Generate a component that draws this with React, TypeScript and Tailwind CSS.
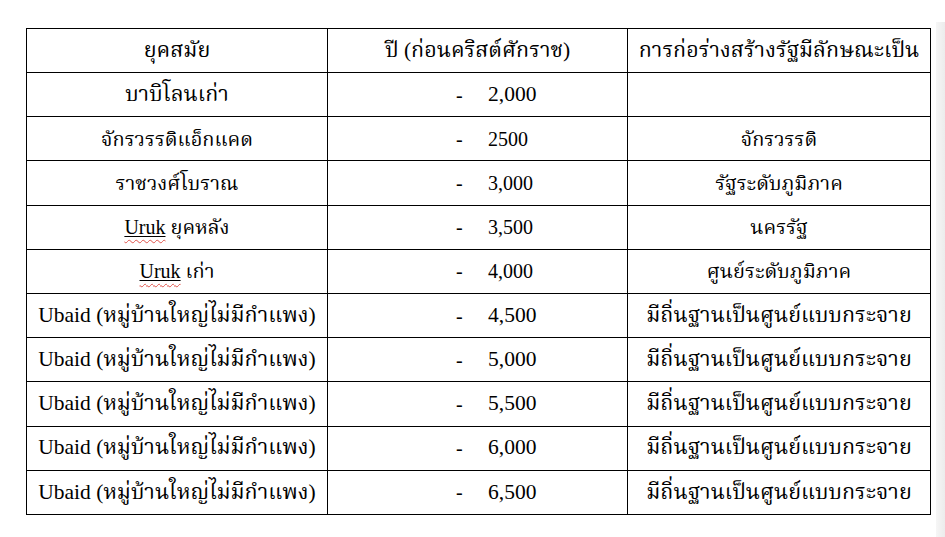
import React from 'react';

// rows of the table: era, year BC, kind of state
const rows = [
  { era: 'บาบิโลนเก่า', year: '2,000', state: '', loop: false },
  { era: 'จักรวรรดิแอ็กแคด', year: '2500', state: 'จักรวรรดิ', loop: true },
  { era: 'ราชวงศ์โบราณ', year: '3,000', state: 'รัฐระดับภูมิภาค', loop: true },
  { era: 'uruk|ยุคหลัง', year: '3,500', state: 'นครรัฐ', loop: true },
  { era: 'uruk|เก่า', year: '4,000', state: 'ศูนย์ระดับภูมิภาค', loop: true },
  { era: 'Ubaid (หมู่บ้านใหญ่ไม่มีกำแพง)', year: '4,500', state: 'มีถิ่นฐานเป็นศูนย์แบบกระจาย', loop: false },
  { era: 'Ubaid (หมู่บ้านใหญ่ไม่มีกำแพง)', year: '5,000', state: 'มีถิ่นฐานเป็นศูนย์แบบกระจาย', loop: false },
  { era: 'Ubaid (หมู่บ้านใหญ่ไม่มีกำแพง)', year: '5,500', state: 'มีถิ่นฐานเป็นศูนย์แบบกระจาย', loop: false },
  { era: 'Ubaid (หมู่บ้านใหญ่ไม่มีกำแพง)', year: '6,000', state: 'มีถิ่นฐานเป็นศูนย์แบบกระจาย', loop: false },
  { era: 'Ubaid (หมู่บ้านใหญ่ไม่มีกำแพง)', year: '6,500', state: 'มีถิ่นฐานเป็นศูนย์แบบกระจาย', loop: false },
];

const Uruk = () => (
  <span className="underline decoration-wavy decoration-[#e0524a] decoration-1 underline-offset-[5px]">
    <span className="underline decoration-black decoration-1 underline-offset-2">Uruk</span>
  </span>
);

const EraText = ({ text }: { text: string }) => {
  if (text.startsWith('uruk|')) {
    return (
      <>
        <Uruk /> {text.split('|')[1]}
      </>
    );
  }
  return <>{text}</>;
};

export default function App() {
  return (
    <div
      className="w-[945px] h-[537px] bg-white flex text-black"
      style={{ fontFamily: '"Liberation Serif", "Noto Serif Thai", "Noto Sans Thai", serif' }}
    >
      <div className="flex-1 pl-[26px] pt-[28px]">
        <table className="border-collapse leading-none">
          <thead>
            <tr className="h-[44px] text-[21.5px]">
              <th className="w-[301px] border border-black font-normal">ยุคสมัย</th>
              <th className="w-[300px] border border-black font-normal">ปี (ก่อนคริสต์ศักราช)</th>
              <th className="w-[303px] border border-black font-normal">การก่อร่างสร้างรัฐมีลักษณะเป็น</th>
            </tr>
          </thead>
          <tbody>
            {rows.map((r, i) => (
              <tr key={i} className={`h-[44.2px] ${r.loop ? 'text-[20px]' : 'text-[21.5px]'}`}>
                <td className="border border-black text-center">
                  <EraText text={r.era} />
                </td>
                <td className="border border-black">
                  <div className="flex items-center">
                    <span className="ml-[128px] w-[32px] text-[20px]">-</span>
                    <span>{r.year}</span>
                  </div>
                </td>
                <td className="border border-black text-center">{r.state}</td>
              </tr>
            ))}
          </tbody>
        </table>
      </div>
      <div className="w-[9px] mt-[22px] bg-gradient-to-r from-[#f6f6f6] to-[#ececec]" />
    </div>
  );
}
